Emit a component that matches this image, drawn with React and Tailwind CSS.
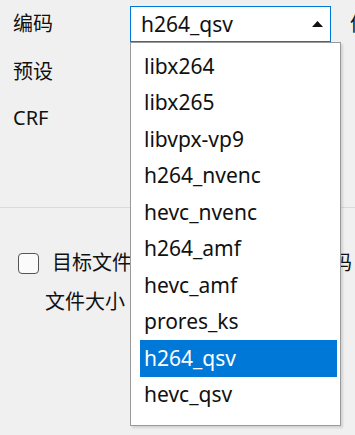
import React from "react";

const codecs = [
  "libx264",
  "libx265",
  "libvpx-vp9",
  "h264_nvenc",
  "hevc_nvenc",
  "h264_amf",
  "hevc_amf",
  "prores_ks",
  "h264_qsv",
  "hevc_qsv",
];

export default function App() {
  const selected = "h264_qsv";
  return (
    <div
      className="relative w-[355px] h-[435px] overflow-hidden bg-[#f0f0f0] text-[20px] text-[#111] leading-none"
      style={{ fontFamily: '"Noto Sans", "Noto Sans CJK SC", sans-serif' }}
    >
      {/* Form */}
      <div className="pl-[13px] pt-[6px]">
        <div className="flex items-center h-[36px] whitespace-nowrap">
          <span className="w-[117px] shrink-0">编码</span>
          <div className="flex shrink-0 items-center justify-between w-[201px] h-[36px] border border-[#0078d7] bg-white pl-[10px] pr-[7px] text-[21px]">
            <span>{selected}</span>
            <svg width="11" height="6" viewBox="0 0 11 6">
              <path d="M0 6 L5.5 0 L11 6 Z" fill="#111" />
            </svg>
          </div>
          <span className="ml-[19px] shrink-0">倍速</span>
        </div>
        <div className="flex items-center h-[36px] mt-[12px]">
          <span>预设</span>
        </div>
        <div className="flex items-center h-[36px] mt-[10px]">
          <span>CRF</span>
        </div>
      </div>

      <div className="mt-[71px] h-px bg-[#dadada]" />

      <div className="flex items-center h-[22px] mt-[44px] pl-[18px] whitespace-nowrap">
        <div className="w-[21px] h-[21px] shrink-0 rounded-[4px] border-[1.5px] border-[#555] bg-[#fbfbfb]" />
        <span className="ml-[13px] shrink-0">目标文件大小限制，启用二次编码</span>
      </div>
      <div className="flex items-center h-[22px] mt-[17px] pl-[45px] whitespace-nowrap">
        <span>文件大小 (MB)</span>
      </div>

      {/* Open dropdown list */}
      <div className="absolute left-[130px] top-[42px] w-[211px] h-[384px] border border-[#9a9a9a] bg-white pt-[5px] pl-[9px] pr-[3px] text-[21px] shadow-[2px_2px_2px_rgba(0,0,0,0.12)]">
        {codecs.map((c) => (
          <div
            key={c}
            className={
              "flex items-center h-[36.5px] pl-[4px] " +
              (c === selected ? "bg-[#0078d7] text-white" : "")
            }
          >
            {c}
          </div>
        ))}
      </div>
    </div>
  );
}
